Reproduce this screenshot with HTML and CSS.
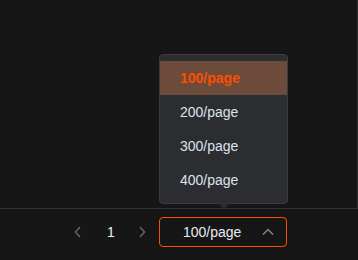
FILE: index.html
```html
<!DOCTYPE html>
<html lang="en">
  <head>
    <meta charset="UTF-8" />
    <meta name="viewport" content="width=device-width, initial-scale=1.0" />
    <title>Pager</title>
    <link rel="stylesheet" href="styles.css">
  </head>
  <body>
    <div class="table-area"></div>
    <div class="pager">
      <button class="pager-btn" type="button">
        <svg width="8" height="12" viewBox="0 0 8 12"><polyline points="6,1 1.5,6 6,11" fill="none" stroke="#6b6b6b" stroke-width="1.3" /></svg>
      </button>
      <button class="pager-btn page-num" type="button">1</button>
      <button class="pager-btn" type="button">
        <svg width="8" height="12" viewBox="0 0 8 12"><polyline points="2,1 6.5,6 2,11" fill="none" stroke="#6b6b6b" stroke-width="1.3" /></svg>
      </button>
      <div class="size-select">
        <span class="size-value">100/page</span>
        <svg class="size-arrow" width="12" height="8" viewBox="0 0 12 8"><polyline points="1,6.5 6,1.5 11,6.5" fill="none" stroke="#8a8a8a" stroke-width="1.3" /></svg>
        <div class="size-menu">
          <div class="size-option active">100/page</div>
          <div class="size-option">200/page</div>
          <div class="size-option">300/page</div>
          <div class="size-option">400/page</div>
        </div>
      </div>
    </div>
  </body>
</html>
```
FILE: styles.css
```css
body {
  margin: 0;
  background-color: #161616;
  font-family: "Liberation Sans", Arial, sans-serif;
  font-size: 14px;
  color: #dde3ea;
}

.table-area {
  height: 208px;
  width: 357px;
  border-right: 1px solid #323232;
  border-bottom: 1px solid #333333;
}

.pager {
  display: flex;
  align-items: center;
  height: 30px;
  padding: 8px 0 0 62px;
}

.pager-btn {
  width: 32px;
  height: 30px;
  padding: 0;
  border: none;
  background: none;
  color: #eef2f6;
  font-family: inherit;
  font-size: 14px;
  display: flex;
  align-items: center;
  justify-content: center;
}

.pager-btn.page-num {
  padding-left: 2px;
}

.size-select {
  position: relative;
  display: flex;
  align-items: center;
  box-sizing: border-box;
  width: 128px;
  height: 30px;
  margin-left: 1px;
  padding: 0 12px 0 23px;
  border: 1px solid #ff4d00;
  border-radius: 4px;
  color: #e6ebf0;
}

.size-arrow {
  margin-left: auto;
}

.size-menu {
  position: absolute;
  left: -1px;
  bottom: calc(100% + 14px);
  box-sizing: border-box;
  width: 129px;
  padding: 6px 0;
  background-color: #2c2d31;
  border: 1px solid #3a3b3f;
  border-radius: 4px;
}

/* little pointer under the menu */
.size-menu::after {
  content: "";
  position: absolute;
  left: 58px;
  bottom: -6px;
  border-left: 6px solid transparent;
  border-right: 6px solid transparent;
  border-top: 6px solid #2c2d31;
}

.size-option {
  height: 34px;
  line-height: 34px;
  padding-left: 20px;
  color: #dde3ea;
}

.size-option.active {
  background-color: #6c4b3b;
  color: #ff4d00;
  font-weight: bold;
}
```
